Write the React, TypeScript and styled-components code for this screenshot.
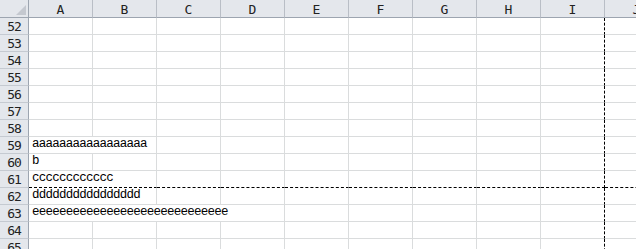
import React from "react";
import styled, { createGlobalStyle, css } from "styled-components";

const Global = createGlobalStyle`
  html, body { margin: 0; padding: 0; background: #ffffff; overflow: hidden; }
  #root { width: 636px; height: 249px; overflow: hidden; }
`;

const COLS = ["A", "B", "C", "D", "E", "F", "G", "H", "I", "J"];

type RowData = { n: number; text?: string; span?: number; breakBelow?: boolean };

const ROWS: RowData[] = [
  { n: 52 }, { n: 53 }, { n: 54 }, { n: 55 }, { n: 56 }, { n: 57 }, { n: 58 },
  { n: 59, text: "aaaaaaaaaaaaaaaaa", span: 2 },
  { n: 60, text: "b", span: 1 },
  { n: 61, text: "cccccccccccc", span: 2, breakBelow: true },
  { n: 62, text: "dddddddddddddddd", span: 2 },
  { n: 63, text: "eeeeeeeeeeeeeeeeeeeeeeeeeeeee", span: 4 },
  { n: 64 }, { n: 65 },
];

const BREAK_COL = 8; // page break after column I

const Sheet = styled.div`
  display: grid;
  grid-template-columns: 29px repeat(10, 64px);
  grid-template-rows: 18px;
  grid-auto-rows: 17px;
  width: 669px;
`;

const headerBase = css`
  background: #e4e7ec;
  color: #222;
  font-family: "DejaVu Sans Mono", monospace;
  font-size: 13px;
  box-sizing: border-box;
  display: flex;
  align-items: center;
  justify-content: center;
  line-height: 1;
`;

const Corner = styled.div`
  ${headerBase};
  position: relative;
  border-right: 1px solid #9da5b0;
  border-bottom: 1px solid #9da5b0;
  &::after {
    content: "";
    position: absolute;
    right: 2px;
    bottom: 2px;
    width: 0;
    height: 0;
    border-style: solid;
    border-width: 0 0 10px 10px;
    border-color: transparent transparent #c4c8cf transparent;
  }
`;

const ColHead = styled.div`
  ${headerBase};
  border-right: 1px solid #b9bec6;
  border-bottom: 1px solid #9da5b0;
  padding-top: 1px;
`;

const RowHead = styled.div`
  ${headerBase};
  border-right: 1px solid #9da5b0;
  border-bottom: 1px solid #c5cad1;
  padding-top: 1px;
  letter-spacing: -1px;
`;

const Cell = styled.div<{ $span: number; $breakRight: boolean; $breakBottom: boolean }>`
  grid-column: span ${(p) => p.$span};
  box-sizing: border-box;
  border-right: 1px ${(p) => (p.$breakRight ? "dashed #000" : "solid #dadcdd")};
  border-bottom: 1px ${(p) => (p.$breakBottom ? "dashed #000" : "solid #dadcdd")};
  font-family: "Liberation Mono", monospace;
  font-size: 12.5px;
  letter-spacing: -0.75px;
  color: #000;
  white-space: nowrap;
  overflow: visible;
  display: flex;
  align-items: flex-end;
  padding: 0 0 3px 3px;
  line-height: 1;
`;

export default function App() {
  return (
    <>
      <Global />
      <Sheet>
        <Corner />
        {COLS.map((c) => (
          <ColHead key={c}>{c}</ColHead>
        ))}
        {ROWS.map((r) => {
          const cells: React.ReactNode[] = [];
          let col = 0;
          while (col < COLS.length) {
            const span = col === 0 && r.text ? r.span ?? 1 : 1;
            const last = col + span - 1;
            cells.push(
              <Cell
                key={col}
                $span={span}
                $breakRight={last === BREAK_COL}
                $breakBottom={!!r.breakBelow}
              >
                {col === 0 ? r.text : null}
              </Cell>
            );
            col += span;
          }
          return (
            <React.Fragment key={r.n}>
              <RowHead>{r.n}</RowHead>
              {cells}
            </React.Fragment>
          );
        })}
      </Sheet>
    </>
  );
}
